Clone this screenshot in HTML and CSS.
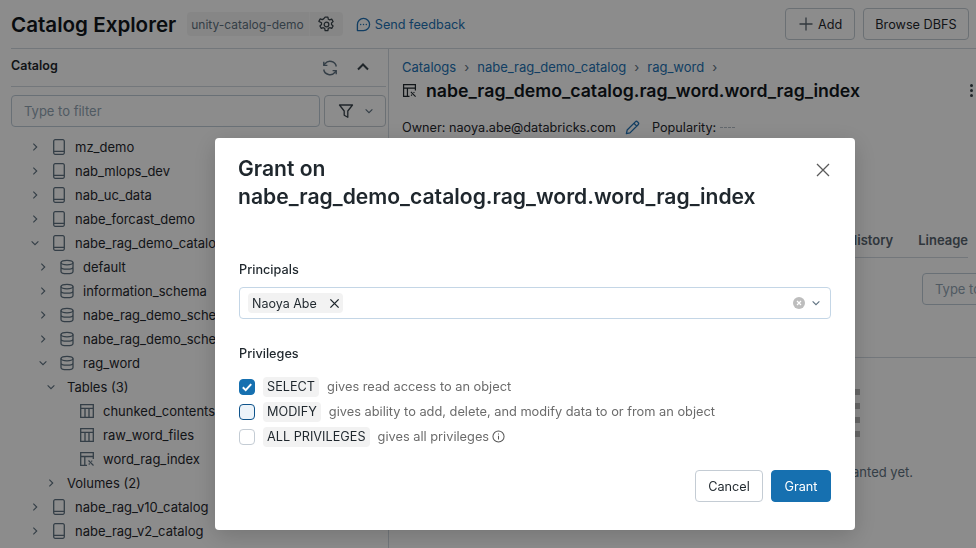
FILE: index.html
```html
<!DOCTYPE html>
<html lang="en">

<head>
    <meta charset="UTF-8">
    <meta name="viewport" content="width=device-width, initial-scale=1.0">
    <title>Catalog Explorer</title>
    <link rel="stylesheet" href="styles.css">
</head>

<body>
    <svg class="defs" width="0" height="0">
        <symbol id="i-catalog" viewBox="0 0 16 16">
            <path d="M4.200 .7h7.600a1.500 1.500 0 0 1 1.500 1.500v11.600a1.500 1.500 0 0 1-1.500 1.500H4.200a1.500 1.500 0 0 1-1.500-1.500V2.200a1.500 1.500 0 0 1 1.500-1.500zM2.700 12.300h10.600" fill="none" stroke="currentColor" stroke-width="1.300"/>
        </symbol>
        <symbol id="i-schema" viewBox="0 0 16 16">
            <ellipse cx="8" cy="3.600" rx="6" ry="2.300" fill="none" stroke="currentColor" stroke-width="1.300"/>
            <path d="M2 3.600v8.800c0 1.200 2.700 2.200 6 2.200s6-1 6-2.200V3.600M2 8c0 1.200 2.700 2.200 6 2.200s6-1 6-2.200" fill="none" stroke="currentColor" stroke-width="1.300"/>
        </symbol>
        <symbol id="i-table" viewBox="0 0 16 16">
            <path d="M1.700 1.700h12.600v12.600H1.700zM1.700 5.300h12.600M6 5.300v9M10 5.300v9" fill="none" stroke="currentColor" stroke-width="1.300"/>
        </symbol>
        <symbol id="i-index" viewBox="0 0 16 16">
            <path d="M8 14.300H1.700V1.700h12.600V8M1.700 5.500h12.600M5.800 5.500v8.800" fill="none" stroke="currentColor" stroke-width="1.300"/>
            <path d="M9.500 9.500l2 2M13.200 9.700l-.9.900M11.500 11.500l3 3M9.700 13.500l1-1" fill="none" stroke="currentColor" stroke-width="1.200"/>
        </symbol>
        <symbol id="i-right" viewBox="0 0 16 16">
            <path d="M5.800 3.500L10.300 8l-4.500 4.500" fill="none" stroke="currentColor" stroke-width="1.500"/>
        </symbol>
        <symbol id="i-down" viewBox="0 0 16 16">
            <path d="M3.500 5.800L8 10.300l4.500-4.500" fill="none" stroke="currentColor" stroke-width="1.500"/>
        </symbol>
    </svg>

    <div class="page">
        <header class="top-bar">
            <h1 class="page-title">Catalog Explorer</h1>
            <div class="workspace">
                <span class="workspace-name">unity-catalog-demo</span>
                <span class="workspace-gear">
                    <svg width="17" height="17" viewBox="0 0 16 16" fill="none" stroke="currentColor" stroke-width="1.200">
                        <circle cx="8" cy="8" r="2.200"/>
                        <path d="M6.700 1h2.600l.4 2 1.300.7 1.900-.7 1.300 2.300-1.500 1.300v1.500l1.500 1.300-1.300 2.300-1.900-.7-1.300.7-.4 2.100H6.700l-.4-2.100-1.300-.7-1.900.7-1.300-2.300 1.500-1.300V6.300L.8 5l1.300-2.300 1.900.7 1.300-.7z" stroke-linejoin="round"/>
                    </svg>
                </span>
            </div>
            <a class="feedback" href="#">
                <svg width="15" height="15" viewBox="0 0 16 16" fill="none" stroke="currentColor" stroke-width="1.400">
                    <path d="M1.500 14.500V8A6.500 6.500 0 1 1 8 14.500z" stroke-linejoin="round"/>
                    <path d="M5 8h.01M8 8h.01M11 8h.01" stroke-linecap="round" stroke-width="1.500"/>
                </svg>
                Send feedback
            </a>
            <div class="top-actions">
                <button class="btn add-btn" type="button">
                    <svg width="14" height="14" viewBox="0 0 14 14" fill="none" stroke="currentColor" stroke-width="1.300">
                        <path d="M7 .5v13M.5 7h13"/>
                    </svg>
                    Add
                </button>
                <button class="btn browse-btn" type="button">Browse DBFS</button>
            </div>
        </header>

        <div class="columns">
            <aside class="sidebar">
                <div class="sidebar-head">
                    <span class="sidebar-title">Catalog</span>
                    <svg class="refresh" width="16" height="16" viewBox="0 0 16 16" fill="none" stroke="currentColor" stroke-width="1.400">
                        <path d="M14.300 6.500A6.400 6.400 0 0 0 3 3.700L1.800 5.200M1.700 9.500A6.400 6.400 0 0 0 13 12.300l1.200-1.500"/>
                        <path d="M1.800 1.800v3.600h3.600M14.200 14.200v-3.600h-3.600"/>
                    </svg>
                    <svg class="collapse" width="16" height="16" viewBox="0 0 16 16" fill="none" stroke="currentColor" stroke-width="2">
                        <path d="M3 10.500L8 5.500l5 5"/>
                    </svg>
                </div>
                <div class="filter-row">
                    <div class="filter-input">Type to filter</div>
                    <div class="filter-btn">
                        <svg width="16" height="16" viewBox="0 0 16 16" fill="none" stroke="currentColor" stroke-width="1.300">
                            <path d="M1.500 2h13L9.800 8v6.300l-3.600-2V8z" stroke-linejoin="round"/>
                        </svg>
                        <svg class="filter-caret" width="12" height="12"><use href="#i-down"/></svg>
                    </div>
                </div>
                <ul class="tree">
                    <li class="row lvl-0"><svg class="arrow"><use href="#i-right"/></svg><svg class="ico"><use href="#i-catalog"/></svg>mz_demo</li>
                    <li class="row lvl-0"><svg class="arrow"><use href="#i-right"/></svg><svg class="ico"><use href="#i-catalog"/></svg>nab_mlops_dev</li>
                    <li class="row lvl-0"><svg class="arrow"><use href="#i-right"/></svg><svg class="ico"><use href="#i-catalog"/></svg>nab_uc_data</li>
                    <li class="row lvl-0"><svg class="arrow"><use href="#i-right"/></svg><svg class="ico"><use href="#i-catalog"/></svg>nabe_forcast_demo</li>
                    <li class="row lvl-0"><svg class="arrow"><use href="#i-down"/></svg><svg class="ico"><use href="#i-catalog"/></svg>nabe_rag_demo_catalog</li>
                    <li class="row lvl-1"><svg class="arrow"><use href="#i-right"/></svg><svg class="ico"><use href="#i-schema"/></svg>default</li>
                    <li class="row lvl-1"><svg class="arrow"><use href="#i-right"/></svg><svg class="ico"><use href="#i-schema"/></svg>information_schema</li>
                    <li class="row lvl-1"><svg class="arrow"><use href="#i-right"/></svg><svg class="ico"><use href="#i-schema"/></svg>nabe_rag_demo_schema</li>
                    <li class="row lvl-1"><svg class="arrow"><use href="#i-right"/></svg><svg class="ico"><use href="#i-schema"/></svg>nabe_rag_demo_schema2</li>
                    <li class="row lvl-1"><svg class="arrow"><use href="#i-down"/></svg><svg class="ico"><use href="#i-schema"/></svg>rag_word</li>
                    <li class="row lvl-2"><svg class="arrow"><use href="#i-down"/></svg>Tables (3)</li>
                    <li class="row lvl-3"><svg class="ico"><use href="#i-table"/></svg>chunked_contents</li>
                    <li class="row lvl-3"><svg class="ico"><use href="#i-table"/></svg>raw_word_files</li>
                    <li class="row lvl-3"><svg class="ico"><use href="#i-index"/></svg>word_rag_index</li>
                    <li class="row lvl-2"><svg class="arrow"><use href="#i-right"/></svg>Volumes (2)</li>
                    <li class="row lvl-0"><svg class="arrow"><use href="#i-right"/></svg><svg class="ico"><use href="#i-catalog"/></svg>nabe_rag_v10_catalog</li>
                    <li class="row lvl-0"><svg class="arrow"><use href="#i-right"/></svg><svg class="ico"><use href="#i-catalog"/></svg>nabe_rag_v2_catalog</li>
                </ul>
            </aside>

            <main class="detail">
                <nav class="crumbs">
                    <a href="#">Catalogs</a><span class="sep">›</span>
                    <a href="#">nabe_rag_demo_catalog</a><span class="sep">›</span>
                    <a href="#">rag_word</a><span class="sep">›</span>
                </nav>
                <div class="detail-title">
                    <svg class="detail-icon"><use href="#i-index"/></svg>
                    <h2>nabe_rag_demo_catalog.rag_word.word_rag_index</h2>
                    <span class="kebab"><i></i><i></i><i></i></span>
                </div>
                <div class="owner-row">
                    Owner: naoya.abe@databricks.com
                    <svg class="pencil" width="15" height="15" viewBox="0 0 16 16" fill="none" stroke="currentColor" stroke-width="1.400">
                        <path d="M1.500 14.500l.8-3.800L11 2a1.700 1.700 0 0 1 2.400 0l.6.600a1.700 1.700 0 0 1 0 2.400l-8.700 8.700zM9.500 3.500l3 3" stroke-linejoin="round"/>
                    </svg>
                    <span class="popularity">Popularity:</span>
                    <span class="pop-bars"><i></i><i></i><i></i><i></i></span>
                </div>
                <div class="tabs">
                    <span>Overview</span><span>Sample Data</span><span>Details</span><span>Permissions</span>
                    <span>History</span><span>Lineage</span>
                </div>
                <div class="perm-tools">
                    <div class="tools-input">Type to filter</div>
                </div>
                <div class="empty-state">
                    <div class="empty-dots"><i></i><i></i><i></i><i></i></div>
                    <p>No permissions have been granted yet.</p>
                </div>
            </main>
        </div>
    </div>

    <div class="mask"></div>

    <div class="modal">
        <svg class="modal-close" width="16" height="16" viewBox="0 0 16 16" fill="none" stroke="currentColor" stroke-width="1.300">
            <path d="M2 2l12 12M14 2L2 14"/>
        </svg>
        <h3 class="modal-title">Grant on<br>nabe_rag_demo_catalog.rag_word.word_rag_index</h3>

        <label class="field-label">Principals</label>
        <div class="select-box">
            <span class="tag">Naoya Abe
                <svg width="11" height="11" viewBox="0 0 12 12" fill="none" stroke="currentColor" stroke-width="1.500">
                    <path d="M1.500 1.500l9 9M10.500 1.500l-9 9"/>
                </svg>
            </span>
            <span class="clear-x">
                <svg width="12" height="12" viewBox="0 0 12 12">
                    <circle cx="6" cy="6" r="6" fill="#bdbdbd"/>
                    <path d="M4 4l4 4M8 4l-4 4" stroke="#fff" stroke-width="1.200"/>
                </svg>
            </span>
            <svg class="select-caret" width="12" height="12"><use href="#i-down"/></svg>
        </div>

        <label class="field-label privileges-label">Privileges</label>
        <div class="priv-list">
            <div class="priv">
                <span class="check checked">
                    <svg width="12" height="12" viewBox="0 0 12 12" fill="none" stroke="#fff" stroke-width="2">
                        <path d="M1.800 6.300l2.900 2.800 5.500-6"/>
                    </svg>
                </span>
                <code class="priv-name">SELECT</code>
                <span class="priv-text">gives read access to an object</span>
            </div>
            <div class="priv">
                <span class="check focused"></span>
                <code class="priv-name">MODIFY</code>
                <span class="priv-text">gives ability to add, delete, and modify data to or from an object</span>
            </div>
            <div class="priv">
                <span class="check"></span>
                <code class="priv-name">ALL PRIVILEGES</code>
                <span class="priv-text">gives all privileges</span>
                <svg class="info" width="13" height="13" viewBox="0 0 14 14" fill="none" stroke="#555" stroke-width="1.100">
                    <circle cx="7" cy="7" r="6"/>
                    <path d="M7 6.200v4M7 3.700v1.200"/>
                </svg>
            </div>
        </div>

        <div class="modal-footer">
            <button class="btn cancel-btn" type="button">Cancel</button>
            <button class="btn grant-btn" type="button">Grant</button>
        </div>
    </div>
</body>

</html>
```

FILE: styles.css
```css
* {
    box-sizing: border-box;
}

html, body {
    height: 100%;
}

body {
    margin: 0;
    overflow: hidden;
    font-family: Inter, "Liberation Sans", sans-serif;
    font-size: 13px;
    color: #1f272d;
    background-color: #fff;
}

.defs {
    position: absolute;
}

.page {
    height: 548px;
    padding-left: 11px;
    overflow: hidden;
}

a {
    color: #2272b4;
    text-decoration: none;
}

/* top bar */
.top-bar {
    display: flex;
    align-items: center;
    height: 49px;
    border-bottom: 1px solid #d1d9e1;
}

.page-title {
    margin: 0;
    font-size: 20.600px;
    font-weight: 600;
    color: #11171c;
}

.workspace {
    display: flex;
    margin-left: 11px;
    height: 24px;
    border-radius: 4px;
    background-color: #f5f5f5;
    color: #5f7281;
    font-size: 12px;
    align-items: center;
}

.workspace-name {
    padding: 0 5px 0 4px;
}

.workspace-gear {
    display: flex;
    align-items: center;
    height: 24px;
    padding: 0 8px;
    color: #3a444c;
    border-left: 1px solid #f9f9f9;
}

.feedback {
    display: flex;
    align-items: center;
    gap: 4px;
    margin-left: 13px;
    font-size: 12.700px;
}

.top-actions {
    display: flex;
    gap: 8px;
    margin-left: auto;
    margin-right: 7px;
}

.btn {
    height: 32px;
    padding: 0;
    border: 1px solid #c4ccd4;
    border-radius: 4px;
    background-color: #fff;
    font-family: inherit;
    font-size: 12.700px;
    color: #1f272d;
}

.add-btn {
    display: flex;
    align-items: center;
    gap: 5px;
    width: 70px;
    padding-left: 13px;
}

.add-btn svg {
    color: #5a6670;
}

.browse-btn {
    width: 106px;
}

/* two columns */
.columns {
    display: flex;
    height: 499px;
}

.sidebar {
    width: 378px;
    flex: none;
    border-right: 1px solid #d1d9e1;
    overflow: hidden;
}

.sidebar-head {
    display: flex;
    align-items: center;
    width: 375px;
    height: 38px;
    border-bottom: 1px solid #d1d9e1;
}

.sidebar-title {
    font-size: 12.500px;
    font-weight: 600;
    margin-right: auto;
    margin-bottom: 5px;
}

.refresh {
    color: #5f7281;
    margin-right: 17px;
}

.collapse {
    color: #3a444c;
    margin-right: 15px;
    margin-bottom: 2px;
}

.filter-row {
    display: flex;
    gap: 4px;
    width: 375px;
    margin-top: 8px;
}

.filter-input {
    flex: 1;
    height: 32px;
    line-height: 30px;
    padding-left: 12px;
    border: 1px solid #c0cdd8;
    border-radius: 4px;
    color: #92a4b3;
}

.filter-btn {
    display: flex;
    align-items: center;
    justify-content: space-between;
    width: 62px;
    height: 32px;
    padding: 0 10px 0 13px;
    border: 1px solid #c4ccd4;
    border-radius: 4px;
    color: #3a444c;
}

.filter-caret {
    color: #5f7281;
}

.tree {
    list-style: none;
    margin: 8px 0 0;
    padding: 0;
}

.row {
    display: flex;
    align-items: center;
    height: 24px;
    white-space: nowrap;
    color: #1f272d;
}

.arrow {
    width: 12px;
    height: 12px;
    flex: none;
    margin-right: 10px;
    color: #5f7281;
}

.ico {
    width: 16px;
    height: 16px;
    flex: none;
    margin-right: 8px;
    color: #5f7281;
}

.lvl-0 {
    padding-left: 18px;
}

.lvl-1 {
    padding-left: 26px;
}

.lvl-2 {
    padding-left: 34px;
}

.lvl-3 {
    padding-left: 68px;
}

/* detail side */
.detail {
    flex: 1;
    padding-left: 13px;
    min-width: 0;
    overflow: hidden;
}

.crumbs {
    display: flex;
    align-items: center;
    height: 20px;
    margin-top: 8px;
    white-space: nowrap;
}

.sep {
    margin: 0 8px;
    color: #5f7281;
}

.detail-title {
    display: flex;
    align-items: center;
    height: 28px;
    margin-top: -1px;
    margin-right: 3px;
}

.detail-icon {
    width: 15px;
    height: 15px;
    margin: 0 9px 0 0;
    color: #1f272d;
}

.detail-title h2 {
    margin: 0;
    font-size: 17.700px;
    font-weight: 600;
    color: #11171c;
    white-space: nowrap;
}

.kebab {
    display: flex;
    flex-direction: column;
    gap: 2px;
    margin-left: auto;
}

.kebab i {
    width: 3px;
    height: 3px;
    border-radius: 50%;
    background-color: #3a444c;
}

.owner-row {
    display: flex;
    align-items: center;
    margin-top: 13px;
    height: 20px;
    font-size: 12.700px;
    white-space: nowrap;
}

.pencil {
    margin-left: 9px;
    color: #2272b4;
}

.popularity {
    margin-left: 12px;
}

.pop-bars {
    display: flex;
    gap: 1px;
    margin-left: 4px;
}

.pop-bars i {
    width: 3px;
    height: 1px;
    background-color: #b5bec6;
}

.tabs {
    display: flex;
    justify-content: flex-end;
    gap: 25px;
    height: 32px;
    margin-top: 89px;
    margin-right: 8px;
    padding-top: 6px;
    border-bottom: 1px solid #d1d9e1;
    font-weight: 600;
    color: #56636e;
    white-space: nowrap;
}

.perm-tools {
    height: 100px;
    padding: 15px 0 0 520px;
    border-bottom: 1px solid #d1d9e1;
    white-space: nowrap;
}

.tools-input {
    width: 120px;
    height: 32px;
    line-height: 30px;
    padding-left: 12px;
    border: 1px solid #c0cdd8;
    border-radius: 4px;
    color: #92a4b3;
}

.empty-state {
    padding: 31px 0 0 453px;
}

.empty-dots {
    display: flex;
    flex-direction: column;
    gap: 8px;
    width: 5px;
}

.empty-dots i {
    height: 6px;
    background-color: #bbb;
}

.empty-state p {
    margin: 27px 0 0 -240px;
    white-space: nowrap;
    text-align: right;
    width: 298px;
    color: #5f7281;
}

/* modal over the page */
.mask {
    position: fixed;
    inset: 0;
    background-color: rgba(0, 0, 0, .45);
}

.modal {
    position: fixed;
    left: 215px;
    top: 138px;
    width: 640px;
    height: 392px;
    padding: 17px 24px 0 24px;
    background-color: #fff;
    border-radius: 4px;
    box-shadow: 0 6px 24px rgba(0, 0, 0, .18);
}

.modal-close {
    position: absolute;
    top: 24px;
    right: 24px;
    color: #5a5a5a;
}

.modal-title {
    margin: 0 0 0 -1px;
    font-size: 21.100px;
    line-height: 28px;
    font-weight: 600;
    color: #1f272d;
}

.field-label {
    display: block;
    margin-top: 49px;
    font-weight: 500;
    font-size: 12.700px;
    line-height: 20px;
}

.select-box {
    display: flex;
    align-items: center;
    height: 32px;
    margin-top: 7px;
    padding: 0 8px;
    border: 1px solid #c4d6e6;
    border-radius: 4px;
}

.tag {
    display: flex;
    align-items: center;
    gap: 12px;
    height: 20px;
    padding: 0 3px 0 4px;
    border-radius: 4px;
    background-color: #f2f2f2;
    font-size: 12.500px;
    color: #1f272d;
}

.clear-x {
    display: flex;
    margin-left: auto;
    margin-right: 5px;
}

.select-caret {
    color: #5f7281;
}

.privileges-label {
    margin-top: 25px;
}

.priv-list {
    margin-top: 10px;
}

.priv {
    display: flex;
    align-items: center;
    height: 25px;
}

.check {
    display: flex;
    align-items: center;
    justify-content: center;
    width: 16px;
    height: 16px;
    margin-right: 8px;
    border: 1px solid #c4ccd4;
    border-radius: 4px;
}

.checked {
    background-color: #1670b0;
    border-color: #1670b0;
}

.focused {
    background-color: #ecf3f9;
    border-color: #0e538b;
}

.priv-name {
    padding: 2px 4px;
    border-radius: 4px;
    background-color: #f2f2f2;
    font-family: inherit;
    font-size: 12.700px;
    line-height: 16px;
    color: #1f272d;
}

.priv-text {
    margin-left: 8px;
    font-size: 12.800px;
    color: #6b6b6b;
}

.info {
    margin-left: 3px;
}

.modal-footer {
    display: flex;
    justify-content: flex-end;
    gap: 8px;
    margin-top: 21px;
}

.cancel-btn {
    width: 68px;
}

.grant-btn {
    width: 60px;
    background-color: #1670b0;
    border-color: #1670b0;
    color: #fff;
}
```
